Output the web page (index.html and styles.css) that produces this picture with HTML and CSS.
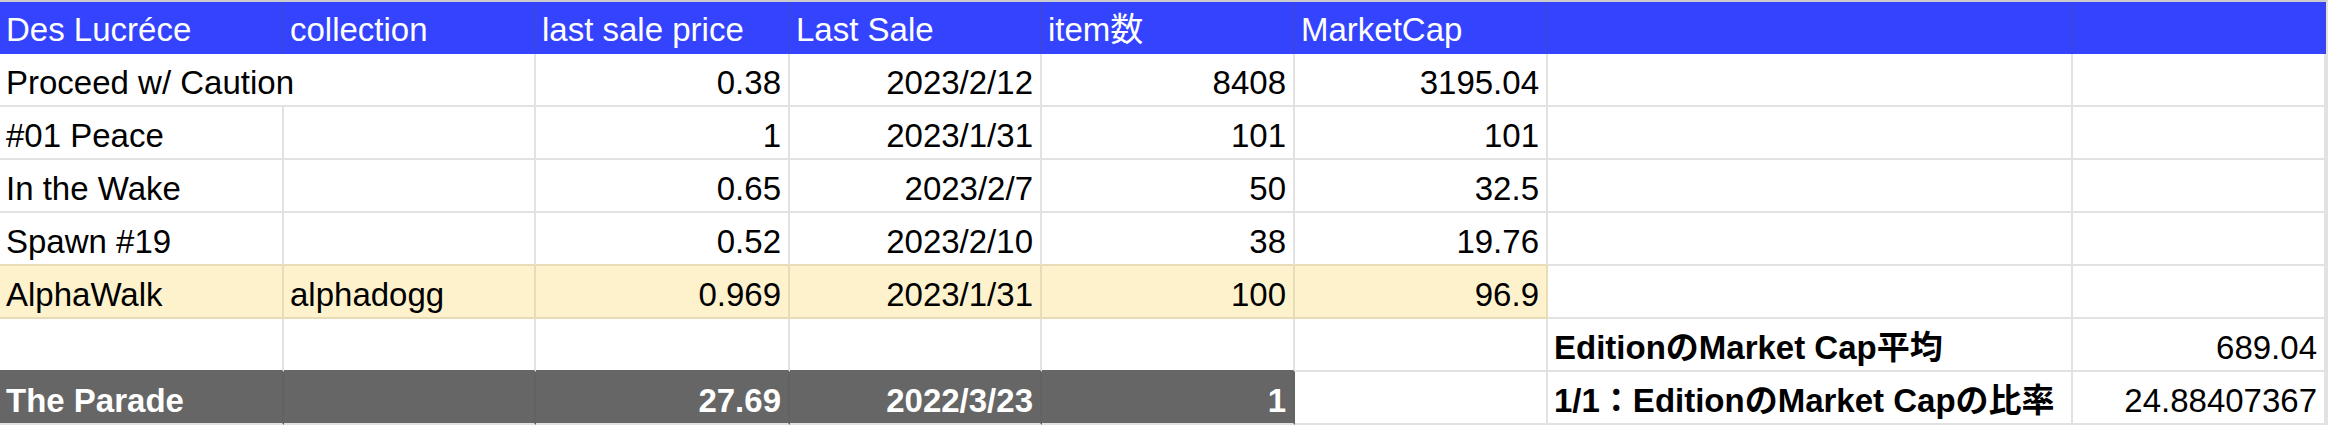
FILE: index.html
```html
<!DOCTYPE html>
<html lang="ja">
<head>
<meta charset="utf-8">
<title>Sheet</title>
<link rel="stylesheet" href="styles.css">
</head>
<body>
<div class="sheet">
  <div class="c h">Des Lucréce</div>
  <div class="c h">collection</div>
  <div class="c h">last sale price</div>
  <div class="c h">Last Sale</div>
  <div class="c h">item数</div>
  <div class="c h">MarketCap</div>
  <div class="c h"></div>
  <div class="c h"></div>

  <div class="c span2">Proceed w/ Caution</div>
  <div class="c r">0.38</div>
  <div class="c r">2023/2/12</div>
  <div class="c r">8408</div>
  <div class="c r">3195.04</div>
  <div class="c"></div>
  <div class="c"></div>

  <div class="c">#01 Peace</div>
  <div class="c"></div>
  <div class="c r">1</div>
  <div class="c r">2023/1/31</div>
  <div class="c r">101</div>
  <div class="c r">101</div>
  <div class="c"></div>
  <div class="c"></div>

  <div class="c">In the Wake</div>
  <div class="c"></div>
  <div class="c r">0.65</div>
  <div class="c r">2023/2/7</div>
  <div class="c r">50</div>
  <div class="c r">32.5</div>
  <div class="c"></div>
  <div class="c"></div>

  <div class="c yt">Spawn #19</div>
  <div class="c yt"></div>
  <div class="c r yt">0.52</div>
  <div class="c r yt">2023/2/10</div>
  <div class="c r yt">38</div>
  <div class="c r yt">19.76</div>
  <div class="c"></div>
  <div class="c"></div>

  <div class="c y">AlphaWalk</div>
  <div class="c y">alphadogg</div>
  <div class="c r y">0.969</div>
  <div class="c r y">2023/1/31</div>
  <div class="c r y">100</div>
  <div class="c r y">96.9</div>
  <div class="c"></div>
  <div class="c"></div>

  <div class="c dt"></div>
  <div class="c dt"></div>
  <div class="c dt"></div>
  <div class="c dt"></div>
  <div class="c dt"></div>
  <div class="c"></div>
  <div class="c b">EditionのMarket Cap平均</div>
  <div class="c r">689.04</div>

  <div class="c d b">The Parade</div>
  <div class="c d"></div>
  <div class="c d r b">27.69</div>
  <div class="c d r b">2022/3/23</div>
  <div class="c d r b">1</div>
  <div class="c"></div>
  <div class="c b">1/1：EditionのMarket Capの比率</div>
  <div class="c r">24.88407367</div>
</div>
</body>
</html>
```

FILE: styles.css
```css
html, body {
  margin: 0;
  padding: 0;
  background: #ffffff;
}

body {
  font-family: "Liberation Sans", Arial, "Noto Sans CJK JP", sans-serif;
  font-size: 33px;
  color: #000000;
}

.sheet {
  display: grid;
  grid-template-columns: 284px 252px 254px 252px 253px 253px 525px 253px;
  grid-auto-rows: 53px;
  grid-template-rows: 52px;
  border-top: 2px solid #cccccc;
  width: 2326px;
  border-right: 2px solid #e2e2e2;
}

.c {
  box-sizing: border-box;
  display: flex;
  align-items: flex-end;
  padding: 0 6px 3px 6px;
  line-height: 38px;
  white-space: nowrap;
  overflow: hidden;
  border-right: 2px solid #e2e2e2;
  border-bottom: 2px solid #e2e2e2;
}

.span2 {
  grid-column: span 2;
}

.h {
  background: #3444fe;
  color: #ffffff;
  border-bottom: none;
  border-right-color: #3a45e0;
  padding-bottom: 5px;
}

.r {
  justify-content: flex-end;
  padding-right: 7px;
}

.b {
  font-weight: bold;
}

.y {
  background: #fef2cc;
  border-right-color: #e8dcb6;
  border-bottom-color: #e8dcb6;
}

.yt {
  border-bottom-color: #e8dcb6;
}

.dt {
  border-bottom-color: #666666;
}

.d {
  background: #666666;
  color: #ffffff;
  border-right-color: #626262;
}
```
